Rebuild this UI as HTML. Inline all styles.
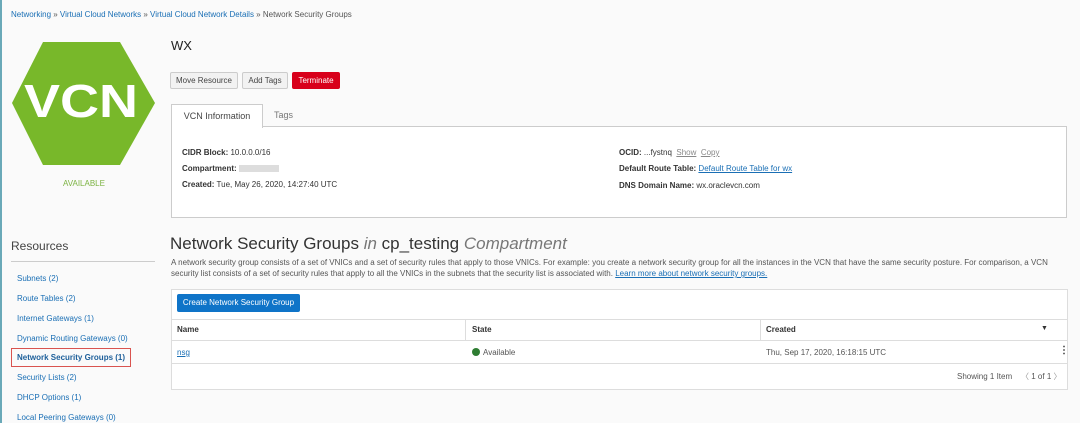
<!DOCTYPE html>
<html><head><meta charset="utf-8"><style>
*{margin:0;padding:0;box-sizing:border-box}
body{width:1080px;height:423px;overflow:hidden;background:#fafafa;font-family:"Liberation Sans",sans-serif;color:#333;position:relative}
.a{position:absolute;white-space:nowrap}
.s{font-size:8px}
.l{color:#1a6fb5}
.btn{position:absolute;top:72px;height:17px;border:1px solid #ccc;background:#f2f2f2;font-size:8px;line-height:15px;text-align:center;color:#444;border-radius:2px}
b{font-weight:bold;color:#333}
.side{position:absolute;left:17px;font-size:8px;color:#1a6fb5}
</style></head><body>
<div class="a" style="left:0;top:0;width:2px;height:423px;background:#6aa9b8"></div>
<div class="a s" style="left:11px;top:10px;color:#555"><span class="l">Networking</span> » <span class="l">Virtual Cloud Networks</span> » <span class="l">Virtual Cloud Network Details</span> » Network Security Groups</div>
<svg class="a" style="left:0;top:0" width="170" height="200"><polygon points="43,42 120,42 155,103 120,165 43,165 12,103" fill="#78b82a"/><text x="81" y="117" text-anchor="middle" font-family="Liberation Sans" font-weight="bold" font-size="46" fill="#fff" textLength="114" lengthAdjust="spacingAndGlyphs">VCN</text></svg>
<div class="a" style="left:63px;top:179px;font-size:8px;color:#7cb342">AVAILABLE</div>
<div class="a" style="left:171px;top:38px;font-size:13px;color:#222">WX</div>
<div class="btn" style="left:170px;width:68px">Move Resource</div>
<div class="btn" style="left:242px;width:46px">Add Tags</div>
<div class="btn" style="left:292px;width:48px;background:#d8001b;border-color:#d8001b;color:#fff">Terminate</div>
<div class="a" style="left:171px;top:126px;width:896px;height:92px;border:1px solid #ccc;background:#fff"></div>
<div class="a" style="left:171px;top:104px;width:92px;height:24px;border:1px solid #ccc;border-bottom:none;background:#fff;font-size:9px;line-height:22px;text-align:center;color:#444">VCN Information</div>
<div class="a" style="left:274px;top:110px;font-size:9px;color:#777">Tags</div>
<div class="a s" style="left:182px;top:148px"><b>CIDR Block:</b> 10.0.0.0/16</div>
<div class="a s" style="left:182px;top:164px"><b>Compartment:</b> <span style="display:inline-block;width:40px;height:7px;background:#ddd;vertical-align:middle"></span></div>
<div class="a s" style="left:182px;top:180px"><b>Created:</b> Tue, May 26, 2020, 14:27:40 UTC</div>
<div class="a s" style="left:619px;top:148px"><b>OCID:</b> ...fystnq&nbsp; <u style="color:#888">Show</u>&nbsp; <u style="color:#888">Copy</u></div>
<div class="a s" style="left:619px;top:164px"><b>Default Route Table:</b> <u class="l">Default Route Table for wx</u></div>
<div class="a s" style="left:619px;top:181px"><b>DNS Domain Name:</b> wx.oraclevcn.com</div>
<div class="a" style="left:11px;top:239px;font-size:12px;color:#444">Resources</div>
<div class="a" style="left:11px;top:261px;width:144px;border-top:1px solid #ccc"></div>
<div class="side" style="top:274px">Subnets (2)</div>
<div class="side" style="top:294px">Route Tables (2)</div>
<div class="side" style="top:314px">Internet Gateways (1)</div>
<div class="side" style="top:334px">Dynamic Routing Gateways (0)</div>
<div class="a" style="left:11px;top:348px;width:120px;height:19px;border:1px solid #d9534f"></div>
<div class="side" style="top:353px;font-weight:bold;color:#1d5f9a">Network Security Groups (1)</div>
<div class="side" style="top:373px">Security Lists (2)</div>
<div class="side" style="top:393px">DHCP Options (1)</div>
<div class="side" style="top:413px">Local Peering Gateways (0)</div>
<div class="a" style="left:170px;top:234px;font-size:17px;color:#333">Network Security Groups <i style="color:#777">in</i> cp_testing <i style="color:#777">Compartment</i></div>
<div class="a" style="left:171px;top:257px;font-size:8px;color:#555;line-height:11px">A network security group consists of a set of VNICs and a set of security rules that apply to those VNICs. For example: you create a network security group for all the instances in the VCN that have the same security posture. For comparison, a VCN<br>security list consists of a set of security rules that apply to all the VNICs in the subnets that the security list is associated with. <u class="l">Learn more about network security groups.</u></div>
<div class="a" style="left:171px;top:289px;width:897px;height:101px;border:1px solid #ddd;background:#fff"></div>
<div class="a" style="left:177px;top:294px;width:123px;height:18px;background:#0f74c8;color:#fff;font-size:8px;line-height:18px;text-align:center;border-radius:2px">Create Network Security Group</div>
<div class="a" style="left:172px;top:319px;width:895px;border-top:1px solid #ddd;border-bottom:1px solid #ddd;height:22px"></div>
<div class="a" style="left:172px;top:363px;width:895px;border-top:1px solid #ddd"></div>
<div class="a" style="left:465px;top:319px;height:22px;border-left:1px solid #ddd"></div>
<div class="a" style="left:760px;top:319px;height:22px;border-left:1px solid #ddd"></div>
<div class="a s" style="left:177px;top:325px;font-weight:bold">Name</div>
<div class="a s" style="left:472px;top:325px;font-weight:bold">State</div>
<div class="a s" style="left:766px;top:325px;font-weight:bold">Created</div>
<div class="a" style="left:1041px;top:325px;font-size:7px">▼</div>
<div class="a s l" style="left:177px;top:348px"><u>nsg</u></div>
<div class="a" style="left:472px;top:348px;width:8px;height:8px;border-radius:50%;background:#2e7d32"></div>
<div class="a s" style="left:483px;top:348px;color:#555">Available</div>
<div class="a s" style="left:766px;top:348px;color:#555">Thu, Sep 17, 2020, 16:18:15 UTC</div>
<div class="a" style="left:1059px;top:345px;font-size:10px;font-weight:bold">⋮</div>
<div class="a s" style="left:957px;top:371px;color:#555">Showing 1 Item &nbsp;&nbsp; <span style="color:#999">〈</span> 1 of 1 <span style="color:#999">〉</span></div>
</body></html>
